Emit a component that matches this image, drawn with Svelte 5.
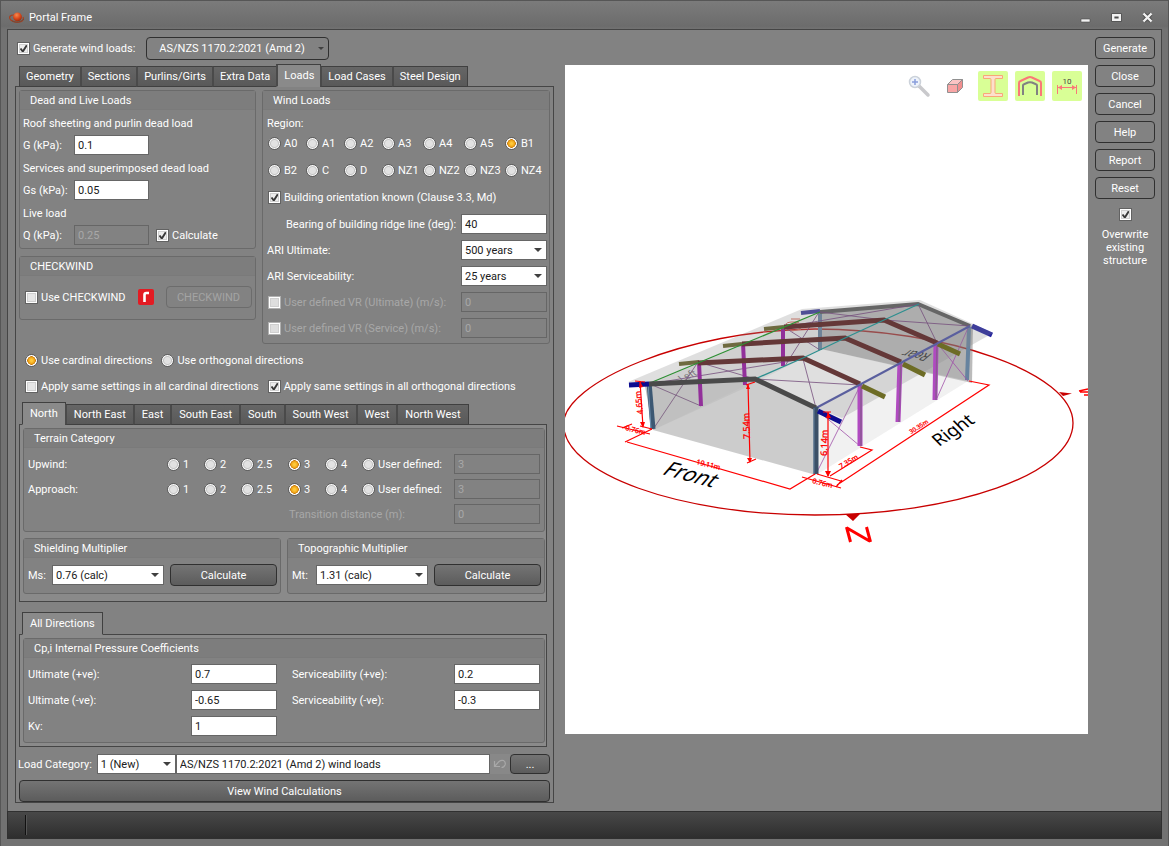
<script>
  const mainTabs = ['Geometry', 'Sections', 'Purlins/Girts', 'Extra Data', 'Loads', 'Load Cases', 'Steel Design'];
  const directions = ['North', 'North East', 'East', 'South East', 'South', 'South West', 'West', 'North West'];
  const regions = ['A0', 'A1', 'A2', 'A3', 'A4', 'A5', 'B1', 'B2', 'C', 'D', 'NZ1', 'NZ2', 'NZ3', 'NZ4'];
  const categories = ['1', '2', '2.5', '3', '4', 'User defined:'];
  const actions = ['Generate', 'Close', 'Cancel', 'Help', 'Report', 'Reset'];

  let mainTab = $state('Loads');
  let direction = $state('North');
  let region = $state('B1');
  let mode = $state('cardinal');
  let terrain = $state({ Upwind: '3', Approach: '3' });
</script>

{#snippet tabs(list, active, pick)}
  <div class="tabs" role="tablist">
    {#each list as name}
      <button class="tab" class:active={name === active} role="tab" aria-selected={name === active} onclick={() => pick(name)}>{name}</button>
    {/each}
  </div>
{/snippet}

{#snippet combo(id, value, others)}
  <span class="combo">
    <select {id}>
      <option>{value}</option>
      {#each others as other}<option>{other}</option>{/each}
    </select>
  </span>
{/snippet}

<div class="window">
  <header class="titlebar">
    <svg class="logo" viewBox="0 0 16 12" width="16" height="12" aria-hidden="true">
      <defs>
        <radialGradient id="ball" cx="0.4" cy="0.3" r="0.8">
          <stop offset="0" stop-color="#f58a50" /><stop offset="0.5" stop-color="#dc4a1c" /><stop offset="1" stop-color="#8c2408" />
        </radialGradient>
      </defs>
      <path d="M5 3C1 3 0 5 1 7c1 2 6 4 10 3 3-1 4-3 3-5" fill="none" stroke="#a8401f" stroke-width="1.2" />
      <circle cx="8.5" cy="4.8" r="4.4" fill="url(#ball)" />
      <path d="M3 9c4 2 9 1 12-2" fill="none" stroke="#6d4b3c" stroke-width="1" />
    </svg>
    <h1>Portal Frame</h1>
    <div class="window-buttons">
      <button aria-label="Minimize"><svg viewBox="0 0 11 11" width="11" height="11"><path d="M1 7h9v3H1z" fill="#f2f2f2" stroke="#4c4c4c" stroke-width="0.6" /></svg></button>
      <button aria-label="Maximize"><svg viewBox="0 0 11 11" width="11" height="11"><path d="M2.5 3.5h6v4h-6z" fill="none" stroke="#4c4c4c" stroke-width="4.4" /><path d="M2.2 3.2h6.6v4.6H2.2z" fill="none" stroke="#f2f2f2" stroke-width="2.4" /></svg></button>
      <button aria-label="Close window"><svg viewBox="0 0 11 11" width="11" height="11"><path d="M2 2l7 7M9 2l-7 7" stroke="#4c4c4c" stroke-width="4" /><path d="M1.5 1.5l8 8M9.500 1.500l-8 8" stroke="#f2f2f2" stroke-width="2.4" /></svg></button>
    </div>
  </header>

  <main class="client">
    <div class="form">
      <div class="generate">
        <label class="choice"><input type="checkbox" checked />Generate wind loads:</label>
        <span class="combo standard">
          <select aria-label="Wind load standard"><option>AS/NZS 1170.2:2021 (Amd 2)</option></select>
        </span>
      </div>

      {@render tabs(mainTabs, mainTab, (name) => (mainTab = name))}
      <div class="panel outer">
        <div class="top">
          <div class="stack">
            <section class="group">
              <h2>Dead and Live Loads</h2>
              <div class="body dead">
                <p>Roof sheeting and purlin dead load</p>
                <div class="line"><label for="g">G (kPa):</label><input id="g" type="text" value="0.1" /></div>
                <p>Services and superimposed dead load</p>
                <div class="line"><label for="gs">Gs (kPa):</label><input id="gs" type="text" value="0.05" /></div>
                <p>Live load</p>
                <div class="line">
                  <label for="q">Q (kPa):</label><input id="q" type="text" value="0.25" disabled />
                  <label class="choice"><input type="checkbox" checked />Calculate</label>
                </div>
              </div>
            </section>
            <section class="group">
              <h2>CHECKWIND</h2>
              <div class="body check">
                <label class="choice"><input type="checkbox" />Use CHECKWIND</label>
                <svg viewBox="0 0 16 16" width="16" height="16" aria-hidden="true">
                  <rect width="16" height="16" rx="2" fill="#e31b23" />
                  <path d="M6.500 13V5.800Q6.500 4 8.300 4H11" fill="none" stroke="#fff" stroke-width="2.600" />
                </svg>
                <button class="btn" disabled>CHECKWIND</button>
              </div>
            </section>
          </div>

          <section class="group">
            <h2>Wind Loads</h2>
            <div class="body wind">
              <p>Region:</p>
              <div class="regions">
                {#each regions as name}
                  <label class="choice"><input type="radio" name="region" value={name} bind:group={region} />{name}</label>
                {/each}
              </div>
              <div class="field"><label class="choice"><input type="checkbox" checked />Building orientation known (Clause 3.3, Md)</label></div>
              <div class="field"><label class="indent" for="bearing">Bearing of building ridge line (deg):</label><input id="bearing" type="text" value="40" /></div>
              <div class="field"><label for="ariu">ARI Ultimate:</label>{@render combo('ariu', '500 years', ['1000 years'])}</div>
              <div class="field"><label for="aris">ARI Serviceability:</label>{@render combo('aris', '25 years', ['50 years'])}</div>
              <div class="field"><label class="choice off"><input type="checkbox" disabled />User defined VR (Ultimate) (m/s):</label><input type="text" aria-label="VR ultimate" value="0" disabled /></div>
              <div class="field"><label class="choice off"><input type="checkbox" disabled />User defined VR (Service) (m/s):</label><input type="text" aria-label="VR service" value="0" disabled /></div>
            </div>
          </section>
        </div>

        <div class="modes">
          <div>
            <label class="choice"><input type="radio" name="mode" value="cardinal" bind:group={mode} />Use cardinal directions</label>
            <label class="choice"><input type="radio" name="mode" value="orthogonal" bind:group={mode} />Use orthogonal directions</label>
          </div>
          <div>
            <label class="choice"><input type="checkbox" />Apply same settings in all cardinal directions</label>
            <label class="choice"><input type="checkbox" checked />Apply same settings in all orthogonal directions</label>
          </div>
        </div>

        <div class="nest">
          {@render tabs(directions, direction, (name) => (direction = name))}
          <div class="panel inner tall">
            <section class="group">
              <h2>Terrain Category</h2>
              <div class="body terrain">
                {#each ['Upwind', 'Approach'] as side}
                  <div class="terrain-row">
                    <span>{side}:</span>
                    {#each categories as name}
                      <label class="choice"><input type="radio" name={side} value={name} bind:group={terrain[side]} />{name}</label>
                    {/each}
                    <input type="text" aria-label="{side} user defined" value="3" disabled />
                  </div>
                {/each}
                <div class="terrain-row">
                  <label class="off transition" for="trans">Transition distance (m):</label>
                  <input id="trans" type="text" value="0" disabled />
                </div>
              </div>
            </section>
            <div class="pair">
              <section class="group">
                <h2>Shielding Multiplier</h2>
                <div class="body mult"><label for="ms">Ms:</label>{@render combo('ms', '0.76 (calc)', ['1.0'])}<button class="btn dark">Calculate</button></div>
              </section>
              <section class="group">
                <h2>Topographic Multiplier</h2>
                <div class="body mult"><label for="mt">Mt:</label>{@render combo('mt', '1.31 (calc)', ['1.0'])}<button class="btn dark">Calculate</button></div>
              </section>
            </div>
          </div>
        </div>

        <div class="nest">
          {@render tabs(['All Directions'], 'All Directions', () => {})}
          <div class="panel inner">
            <section class="group">
              <h2>Cp,i Internal Pressure Coefficients</h2>
              <div class="body pressure">
                <label for="up">Ultimate (+ve):</label><input id="up" type="text" value="0.7" />
                <label for="sp">Serviceability (+ve):</label><input id="sp" type="text" value="0.2" />
                <label for="un">Ultimate (-ve):</label><input id="un" type="text" value="-0.65" />
                <label for="sn">Serviceability (-ve):</label><input id="sn" type="text" value="-0.3" />
                <label for="kv">Kv:</label><input id="kv" type="text" value="1" />
              </div>
            </section>
          </div>
        </div>

        <div class="category">
          <label for="cat">Load Category:</label>
          {@render combo('cat', '1 (New)', ['2 (New)'])}
          <input type="text" aria-label="Load category title" value="AS/NZS 1170.2:2021 (Amd 2) wind loads" />
          <button class="undo" aria-label="Undo" disabled>
            <svg viewBox="0 0 14 10" width="14" height="10"><path d="M1.500 2v5.500h5.500M2 7l4-4.500Q8 1 10.500 1.500Q13 3 12 6Q11 8.500 8.500 8.500" fill="none" stroke="#a8a8a8" stroke-width="1.200" /></svg>
          </button>
          <button class="btn dark">...</button>
        </div>
        <button class="btn dark view">View Wind Calculations</button>
      </div>
    </div>

    <div class="viewport">
      <svg class="scene" viewBox="565 65 523 669" preserveAspectRatio="xMidYMid meet" role="img" aria-label="Portal frame model">
        <g fill="none" stroke="#c80000">
          <path d="M563.500 424C563.500 383 685 330 815 329C945 329 1073 372 1073 423C1073 474 955 515 815 515C680 515 563.500 474 563.500 424" stroke-width="1.300" />
        </g>
        <path d="M845 514h15l-7 7zM1059 392l13 1.500l-9 2.500z" fill="#c80000" />
        <!-- walls, then roof sheeting -->
        <path d="M645 386L821 312L821 349L747 387L653 430z" fill="#808080" opacity="0.16" />
        <path d="M820 311L919 303L973 326L972 383L821 349z" fill="#707070" opacity="0.48" />
        <path d="M816 408L973 326L968 381L816 475z" fill="#808080" opacity="0.15" />
        <path d="M653 430L821 349L968 381L816 475z" fill="#fff" opacity="0.25" />
        <!-- rear frame and cross bracing -->
        <g fill="none" stroke-width="4">
          <path d="M820 312V350M969 327L967 380" stroke="#66839f" />
          <path d="M820 312L918 304L970 326" stroke="#5a5a5a" />
          <path d="M801 313L820 311" stroke="#3a3a9a" />
          <path d="M972 326L992 335" stroke="#2323a0" stroke-width="5" />
        </g>
        <path d="M790 327q-8-4 1-5h8l-7 3 9 4-9 2M791 319h9" fill="none" stroke="#d46a5a" />
        <text class="label" transform="translate(933 354) rotate(190) skewX(-40)" font-size="12" fill="#333">Rear</text>
        <text class="label" transform="translate(682 382) rotate(-24) skewX(20)" font-size="10" fill="#555" opacity="0.8">Left</text>
        <g fill="none" stroke="#6f3a78" stroke-width="0.800">
          <path d="M650 384L701 406M698 362L654 428M649 384L803 359M698 362L755 379L860 385M803 359L816 408" />
          <path d="M784 327L820 350M819 312L785 366M784 327L919 304M820 312L884 320L970 326M918 304L937 343" />
          <path d="M937 343L968 381M968 328L937 398M817 410L860 446M860 386L817 472" stroke="#a050a8" />
        </g>
        <path d="M628 382L802 309L920 300L993 333L842 418L816 408L755 380z" fill="#8a8a8a" opacity="0.270" />
        <path d="M645 386L755 378L816 408L816 475L653 430z" fill="#808080" opacity="0.400" />
        <!-- intermediate frames -->
        <g fill="none" stroke-width="5">
          <path d="M699 362L701 406M743 343L745 385M783 327V366" stroke="#92309a" stroke-width="4" />
          <path d="M860 385V446M900 362L898 422M936 342L935 400" stroke="#b04ac0" />
          <path d="M861 385V446M901 362L899 422M937 342L936 400" stroke="#8a5a92" stroke-width="1.500" />
          <path d="M679 364L699 362M723 346L742 344M764 329L784 327" stroke="#6e6a40" stroke-width="4" />
          <path d="M862 386L885 397M903 364L925 375M938 344L960 354" stroke="#6d6c25" />
          <path d="M698 363L803 358L860 384M742 344L845 338L901 362M784 327L884 320L937 343" stroke="#643838" />
        </g>
        <g fill="none" stroke-width="1.300">
          <path d="M650 383L820 312" stroke="#2f8f35" />
          <path d="M755 379L803 358L845 338L884 320L919 304" stroke="#2d8f8f" />
          <path d="M816 408L970 326" stroke="#5a5f9e" stroke-width="2" />
        </g>
        <!-- front frame -->
        <g fill="none" stroke-width="5">
          <path d="M649 382L653 429" stroke="#3c5873" />
          <path d="M648 382L651 429" stroke="#6d8fae" stroke-width="1" />
          <path d="M649 384L755 379L816 408" stroke="#4a4a4a" stroke-width="5" />
          <path d="M816 407V474" stroke="#3b4f66" />
          <path d="M814 408V474" stroke="#5f7d9a" stroke-width="1" />
          <path d="M629 385L649 384M818 411L841 422" stroke="#0c0c90" />
        </g>
        <!-- dimension lines -->
        <g fill="none" stroke="#f00" stroke-width="1.200">
          <path d="M640 381L643 427M635 381L645 382M640 426L652 429M748 384L750 462M746 385L755 382M747 463L756 459" />
          <path d="M617 426L650 434M622 428L632 424M625 442L652 429M627 442L790 489L815 474" />
          <path d="M828 412V476M823 412h8M802 477L841 488M817 474L841 481M830 476L872 450L860 447M837 485L989 385L969 381M836 487L842 480" />
        </g>
        <path d="M640 381l3 6-4 1zM643 428l-3-6 5 0zM748 384l-2 5 4 0zM750 463l-3-5 5 0zM828 412l-2 6h5zM828 477l-3-6h6z" fill="#f00" />
        <g class="dim" fill="#f00" stroke="#f00" stroke-width="0.300">
          <text transform="translate(643 414) rotate(-96)" font-size="8">4.65m</text>
          <text transform="translate(750 439) rotate(-92)" font-size="9">7.54m</text>
          <text transform="translate(827 456) rotate(-88)" font-size="9">6.14m</text>
          <text transform="translate(625 430) rotate(14)" font-size="7">0.76m</text>
          <text transform="translate(696 464) rotate(14)" font-size="7">19.11m</text>
          <text transform="translate(812 483) rotate(14)" font-size="7">0.76m</text>
          <text transform="translate(841 469) rotate(-31)" font-size="7">7.35m</text>
          <text transform="translate(911 434) rotate(-32)" font-size="6">30.35m</text>
        </g>
        <text class="label" transform="translate(661 474) rotate(15) skewX(-26)" font-size="21">Front</text>
        <text class="label" transform="translate(939 447) rotate(-34) skewX(10)" font-size="18">Right</text>
        <path d="M850.500 542L846.500 527M847 528L869.500 541M870.500 542L866.500 527" fill="none" stroke="#f00" stroke-width="3" />
        <path d="M1079 391l9-2M1080 392h8M1084 395h4" fill="none" stroke="#f00" stroke-width="1.500" />
      </svg>

      <div class="toolbar">
        <button aria-label="Zoom">
          <svg viewBox="0 0 30 30"><path d="M15 15L24 24" stroke="#c9c9cc" stroke-width="3.500" stroke-linecap="round" /><circle cx="11" cy="11" r="5.500" fill="#eef3fb" stroke="#ccd2da" stroke-width="1.500" /><path d="M8 11h6M11 8v6" stroke="#8a9fdc" stroke-width="1.500" /></svg>
        </button>
        <button aria-label="Solid view">
          <svg viewBox="0 0 30 30"><g stroke="#909090" stroke-linejoin="round"><path d="M6.500 13.500h10v8h-10z" fill="#f9a6a6" /><path d="M6.500 13.500l5-5h10l-5 5z" fill="#fbc4c4" /><path d="M16.500 13.500l5-5v8l-5 5z" fill="#f28f8f" /></g></svg>
        </button>
        <button class="on" aria-label="Sections">
          <svg viewBox="0 0 30 30"><path d="M5.500 4.500h19v3h-6.500q-1 0-1 1v13q0 1 1 1h6.500v3h-19v-3h6.500q1 0 1-1v-13q0-1-1-1h-6.500z" fill="#fde0cc" stroke="#f9a878" /></svg>
        </button>
        <button class="on" aria-label="Frames">
          <svg viewBox="0 0 30 30"><path d="M4 25V12Q4 10.500 5.500 10L13 6.500q2-.8 4 0L24.500 10Q26 10.500 26 12V25" fill="none" stroke="#fa7878" stroke-width="2" /><path d="M8 24V14.500Q8 13.500 9 13.200L13 11.500q2-.7 4 0L21 13.200Q22 13.500 22 14.500V24" fill="none" stroke="#828282" stroke-width="2" /></svg>
        </button>
        <button class="on" aria-label="Dimensions">
          <svg viewBox="0 0 30 30"><text x="15" y="13" text-anchor="middle" font-size="8" fill="#444">10</text><path d="M5.500 14v9M24.500 14v9M6 16.500h18" stroke="#fa7878" fill="none" /><path d="M6 16.500l4-2.500v5zM24 16.500l-4-2.500v5z" fill="#fa7878" /></svg>
        </button>
      </div>
    </div>

    <aside class="side">
      {#each actions as name}<button class="btn">{name}</button>{/each}
      <label class="overwrite"><input type="checkbox" checked />Overwrite existing structure</label>
    </aside>
  </main>

  <footer class="status"><span></span></footer>
</div>

<style>
  :global(body) { margin: 0; }
  .window, .window :is(button, input, select) { font-family: Roboto, Tahoma, sans-serif; font-size: 11px; }
  .window, .window button { color: #fff; }
  .window * { box-sizing: border-box; }
  .window {
    box-sizing: border-box; min-height: 100vh; display: flex; flex-direction: column;
    padding: 0 6px 7px 6px; background: #727272; border: 1px solid #565656; line-height: 13px;
    white-space: nowrap;
  }
  h1, h2, p { margin: 0; font-size: 11px; font-weight: 400; }
  button { cursor: default; padding: 0; }

  .titlebar { height: 28px; margin: 0 -6px; padding: 5px 8px 0 8px; display: flex; align-items: center; gap: 4px; background: linear-gradient(#7b7b7b, #6c6c6c 90%, #727272); }
  .window-buttons { margin-left: auto; display: flex; gap: 20px; padding-right: 7px; }
  .window-buttons button { background: none; border: 0; display: flex; }

  .client {
    flex: 1; display: grid; grid-template-columns: minmax(480px, 539px) minmax(0, 1fr) 60px;
    padding: 7px 6px 8px 7px; background: #828282; border: 1px solid #454545; border-bottom: 0;
  }
  .form { display: flex; flex-direction: column; }
  .generate { display: flex; align-items: center; gap: 11px; height: 23px; margin-bottom: 4px; padding-left: 2px; }

  .choice { display: inline-flex; align-items: center; gap: 3px; }
  input[type='checkbox'], input[type='radio'] { appearance: none; flex: none; width: 13px; height: 13px; margin: 0; }
  input[type='checkbox'] { border: 1px solid #626262; background: #e6e6e6; box-shadow: inset 0 0 0 1px #fff, inset 0 0 0 2px #cfcfcf; }
  input[type='checkbox']:checked {
    background: #ececec url("data:image/svg+xml,%3Csvg xmlns='http://www.w3.org/2000/svg' viewBox='0 0 11 11'%3E%3Cpath d='M2.500 5.500L4.800 8.500L8.800 2.200' fill='none' stroke='%23383838' stroke-width='1.900'/%3E%3C/svg%3E");
  }
  input[type='checkbox']:disabled { border-color: #b0b0b0; background: #dedede; }
  input[type='radio'] { border: 1px solid #5c5c5c; border-radius: 50%; background: radial-gradient(circle, #e2e2e2 0 3px, #c4c4c4 4px, #f8f8f8 5px); }
  input[type='radio']:checked { background: radial-gradient(circle at 50% 50%, #ffc83a 0 1px, #f0a81a 3px, #c9790c 4px, #fff 4.500px); }
  .off { color: #a8a8a8; }

  input[type='text'], select { height: 20px; min-width: 0; margin: 0; padding: 0 3px; border: 1px solid #666; border-radius: 0; background: #fff; color: #202020; outline: 0; }
  input[type='text']:disabled { background: transparent; color: #a8a8a8; }
  .combo { position: relative; display: flex; min-width: 0; }
  .combo select { appearance: none; width: 100%; }
  .combo::after { content: ''; position: absolute; right: 5px; top: 8px; border: 4px solid transparent; border-top-color: #404040; border-bottom: 0; pointer-events: none; }
  .standard { width: 183px; }
  .standard select { height: 23px; padding: 0 12px; background: #828282; color: #fff; border-color: #303030; border-radius: 4px; }
  .standard::after { border-width: 3px; border-top-color: #404040; border-bottom: 0; top: 10px; }

  .btn { height: 22px; border: 1px solid #303030; border-radius: 4px; background: #828282; }
  .btn.dark { background: linear-gradient(#747474, #5c5c5c); }
  .window .btn:disabled { border-color: #6c6c6c; color: #a4a4a4; }

  .tabs { display: flex; align-items: flex-end; height: 23px; position: relative; margin-bottom: -1px; }
  .outer, .nest { min-width: 0; }
  .form > .tabs { padding-left: 4px; }
  .nest > .tabs { padding-left: 3px; }
  .tab { height: 21px; padding: 0 7px; border: 1px solid #404040; margin-right: -1px; background: linear-gradient(#666, #595959); }
  .form > .tabs .tab { padding: 0 6px; }
  .tab + .tab { border-left-width: 2px; border-left-color: #4a4a4a; }
  .tabs .tab.active { height: 23px; background: #8a8a8a; border-bottom-color: #8a8a8a; }

  .panel { border: 1px solid #454545; }
  .outer { flex: 1; padding: 3px 3px 0 3px; background: #828282; display: flex; flex-direction: column; }
  .inner { padding: 3px 1px 3px 3px; background: #8a8a8a; }
  .inner.tall { padding-bottom: 7px; }

  .group { border: 1px solid #6a6a6a; border-radius: 3px; background: #828282; min-width: 0; }
  .group h2 { height: 19px; line-height: 19px; padding-left: 10px; border-bottom: 1px solid #7a7a7a; background: #7d7d7d; }
  .top { display: grid; grid-template-columns: 237px minmax(0, 1fr); gap: 6px; }
  .stack { display: flex; flex-direction: column; gap: 7px; }
  .dead { padding: 3px; }
  .dead p { height: 20px; line-height: 21px; margin-bottom: 2px; }
  .line { display: flex; align-items: center; margin-bottom: 3px; }
  .line:last-child { margin-bottom: 0; }
  .line > label:first-child { width: 51px; }
  .line input[type='text'] { width: 75px; margin-right: 7px; }
  .check { display: flex; align-items: center; gap: 12px; padding: 10px 4px 11px 5px; }
  .check .btn { width: 86px; flex: none; margin-left: auto; }
  .check svg { flex: none; }

  .wind { padding: 3px 2px 5px 4px; display: flex; flex-direction: column; gap: 6px; }
  .wind p { height: 14px; line-height: 21px; }
  .regions { display: grid; grid-template-columns: repeat(3, 38px) repeat(3, 41px) 1fr; row-gap: 7px; grid-auto-rows: 20px; padding: 0 0 1px 1px; }
  .wind .field:nth-of-type(3) { margin-top: 1px; }
  .field { display: flex; align-items: center; justify-content: space-between; height: 20px; }
  .field .choice { padding-left: 1px; }
  .field > input, .field > .combo { width: 86px; }
  .indent { padding-left: 19px; }

  .modes { padding: 6px 6px; }
  .modes div { display: flex; align-items: center; gap: 9px; height: 20px; margin-bottom: 6px; }
  .modes div:last-child { margin-bottom: 0; }
  .nest { margin-right: 3px; margin-bottom: 10px; }

  .terrain { display: flex; flex-direction: column; gap: 5px; padding: 6px 4px 7px 4px; }
  .terrain-row { display: grid; grid-template-columns: 139px 37px 37px 47px 37px 37px 1fr 86px; align-items: center; height: 20px; }
  .terrain-row .transition { grid-column: 1 / 8; padding-left: 261px; }
  .pair { display: grid; grid-template-columns: 1fr 1fr; gap: 6px; margin-top: 6px; }
  .mult { display: grid; grid-template-columns: 24px 112px 1fr; align-items: center; padding: 6px 3px 7px 4px; }
  .mult .btn { margin-left: 6px; }
  .pressure { display: grid; grid-template-columns: 163px 86px 177px 86px; row-gap: 6px; align-items: center; padding: 6px 4px; }
  .pressure > input { width: 86px; }
  .pressure > label:nth-of-type(even) { padding-left: 15px; }

  .category { display: flex; align-items: center; margin: -3px 0 6px -1px; }
  .category .combo { width: 79px; margin-left: 5px; }
  .category > input { flex: 1; }
  .undo { width: 20px; height: 20px; border: 0; background: #888; display: grid; place-items: center; }
  .category .btn { width: 40px; height: 20px; }
  .view { width: 100%; }

  .viewport { position: relative; margin: 28px 7px 69px 11px; background: #fff; overflow: hidden; }
  .scene { position: absolute; inset: 0; width: 100%; height: 100%; }
  .label, .dim { font-family: "Noto Sans", sans-serif; }
  .toolbar { position: absolute; top: 6px; right: 6px; display: flex; gap: 7px; }
  .toolbar button { width: 30px; height: 30px; border: 0; border-radius: 2px; background: transparent; }
  .toolbar .on { background: #d9ff96; }
  .toolbar svg { display: block; width: 30px; height: 30px; }

  .side { display: flex; flex-direction: column; gap: 6px; }
  .overwrite { display: flex; flex-direction: column; align-items: center; gap: 7px; margin-top: 3px; white-space: normal; text-align: center; }

  .status { height: 28px; padding: 3px 17px; background: linear-gradient(#484848, #2e2e2e); border: 1px solid #303030; display: flex; }
  .status span { width: 1px; background: #111; border-right: 1px solid #555; box-sizing: content-box; }
</style>
